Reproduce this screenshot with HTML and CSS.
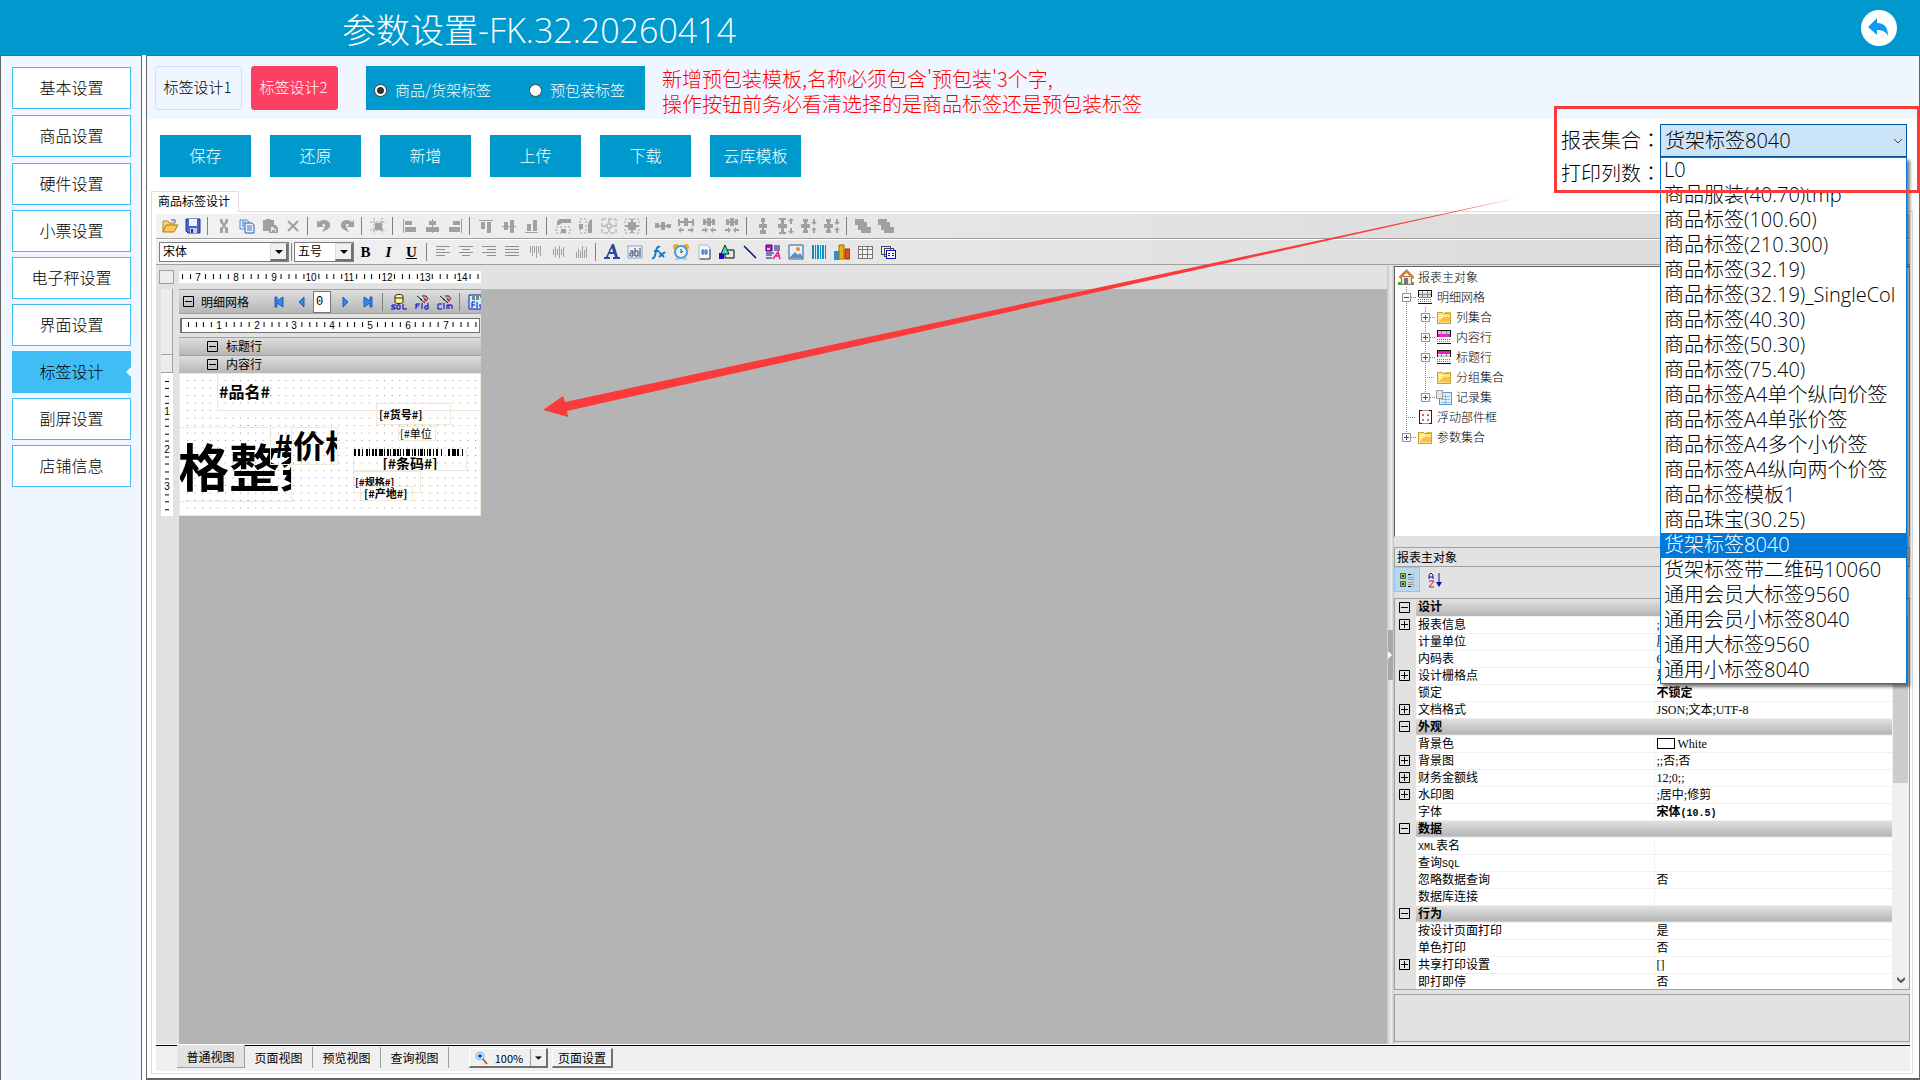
FILE: index.html
```html
<!DOCTYPE html>
<html lang="zh-CN">
<head>
<meta charset="utf-8">
<title>参数设置</title>
<link rel="stylesheet" href="styles.css">
</head>
<body>
<svg class="sprite" aria-hidden="true">
  <symbol id="open" viewBox="0 0 16 16"><path d="M1 14V3h5l1 2h5v3" fill="#f7d774" stroke="#b08a28"/><path d="M1 14 4 7h12l-4 7z" fill="#fbc95a" stroke="#a87818"/><path d="M9 2h4v3" fill="none" stroke="#345a9a"/></symbol>
  <symbol id="save" viewBox="0 0 16 16"><path d="M1 1h14v14H3l-2-2z" fill="#4a63d0" stroke="#23348c"/><path d="M4 1h8v7H4z" fill="#eef4ff"/><path d="M5 10h7v5H5z" fill="#c7cff0"/><path d="M6 11h2v4H6z" fill="#23348c"/></symbol>
  <symbol id="cut" viewBox="0 0 16 16"><path d="M4 1h2l2 5 2-5h2v3L9 8l3 2v5H9v-4L8 9l-1 2v4H4v-5l3-2-3-4z" fill="#a0a0a0"/></symbol>
  <symbol id="copy" viewBox="0 0 16 16"><path d="M1 2h7l2 2v7H1z" fill="#dceaff" stroke="#5b8bd0"/><path d="M6 5h7l2 2v8H6z" fill="#e8f2ff" stroke="#2d5fb0"/><path d="M8 8h5M8 10h5M8 12h5M3 4h3M3 6h2M3 8h2" stroke="#3f78c8"/></symbol>
  <symbol id="paste" viewBox="0 0 16 16"><path d="M1 2h3V1h5v1h3v5h2l2 3v5H7v-2H1z" fill="#a0a0a0"/><path d="M9 9h3v2h2v3H9z" fill="#e8e8e8"/><path d="M10 12h3v2h-3z" fill="#a0a0a0"/></symbol>
  <symbol id="del" viewBox="0 0 16 16"><path d="m3 3 10 10M13 3 3 13" stroke="#a0a0a0" stroke-width="2"/></symbol>
  <symbol id="undo" viewBox="0 0 16 16"><path d="M1 2v7h7L6 7c1-2 4-1 3 1-1 3-2 4-3 6 6-2 9-5 8-8C13 1 6 1 3 4z" fill="#a0a0a0"/></symbol>
  <symbol id="redo" viewBox="0 0 16 16"><path d="M15 2v7H8l2-2C9 5 6 6 7 8c1 3 2 4 3 6-6-2-9-5-8-8C3 1 10 1 13 4z" fill="#a0a0a0"/></symbol>
  <symbol id="snap" viewBox="0 0 16 16"><path d="M4 0v16M12 0v16M0 4h16M0 12h16" stroke="#a0a0a0" stroke-dasharray="2 1"/><path d="M5 5h7v7H5z" fill="#a0a0a0"/></symbol>
  <symbol id="al" viewBox="0 0 16 16"><path d="M2 1h1v14H2zM4 3h7v4H4zM4 9h11v5H4z" fill="#a0a0a0"/></symbol>
  <symbol id="ac" viewBox="0 0 16 16"><path d="M8 1h1v14H8zM5 3h7v4H5zM2 9h13v5H2z" fill="#a0a0a0"/></symbol>
  <symbol id="ar" viewBox="0 0 16 16"><path d="M14 1h1v14h-1zM6 3h7v4H6zM2 9h11v5H2z" fill="#a0a0a0"/></symbol>
  <symbol id="at" viewBox="0 0 16 16"><path d="M1 2h14v1H1zM3 4h4v7H3zM9 4h4v11H9z" fill="#a0a0a0"/></symbol>
  <symbol id="am" viewBox="0 0 16 16"><path d="M1 8h14v1H1zM3 4h4v8H3zM9 2h4v13H9z" fill="#a0a0a0"/></symbol>
  <symbol id="ab" viewBox="0 0 16 16"><path d="M1 14h13v1H1zM3 6h4v7H3zM9 2h4v11H9z" fill="#a0a0a0"/></symbol>
  <symbol id="w1" viewBox="0 0 16 16"><path d="M4 1h12v4H7L4 7H2V4zM6 11h5v4H6z" fill="#a0a0a0"/><path d="M1 9h14v6H1z" fill="none" stroke="#a0a0a0" stroke-dasharray="2 2"/></symbol>
  <symbol id="w2" viewBox="0 0 16 16"><path d="M11 3l3-2v14h-4V7zM1 6h4v5H1z" fill="#a0a0a0"/><path d="M2 1h6v14H2z" fill="none" stroke="#a0a0a0" stroke-dasharray="2 2"/></symbol>
  <symbol id="w3" viewBox="0 0 16 16"><path d="M1 1h14v14H1z" fill="none" stroke="#a0a0a0" stroke-dasharray="4 2"/><path d="M6 6h4v4H6zM8 2v3M8 11v3M2 8h3M11 8h3" fill="none" stroke="#a0a0a0"/></symbol>
  <symbol id="w4" viewBox="0 0 16 16"><path d="M1 1h14v14H1z" fill="none" stroke="#a0a0a0" stroke-dasharray="2 2"/><path d="M4 4h8v8H4zM7 1h2v14H7zM1 7h14v2H1z" fill="#a0a0a0"/></symbol>
  <symbol id="h0" viewBox="0 0 16 16"><path d="M0 5h4v2h2V4h4v3h2V6h4v4h-4V9h-2v3H6V9H4v1H0z" fill="#a0a0a0"/></symbol>
  <symbol id="h1" viewBox="0 0 16 16"><path d="M0 1h2v2h4V0h4v3h4V1h2v7h-2V5h-4v3H6V5H2v3H0zM0 12l3-3v2h3v2H3v2zM16 12l-3-3v2h-3v2h3v2z" fill="#a0a0a0"/></symbol>
  <symbol id="h2" viewBox="0 0 16 16"><path d="M2 1h3v2h1V0h4v3h1V1h3v6h-3V5h-1v3H6V5H5v2H2zM7 12 4 9v2H1v2h3v2zM9 12l3-3v2h3v2h-3v2z" fill="#a0a0a0"/></symbol>
  <symbol id="v0" viewBox="0 0 16 16"><path d="M6 0h4v4H9v2h3v4H9v2h2v4H5v-4h2v-2H4V6h3V4H6z" fill="#a0a0a0"/></symbol>
  <symbol id="v1" viewBox="0 0 16 16"><path d="M1 0h7v2H6v4h3v4H6v4h2v2H1v-2h2v-4H0V6h3V2H1zM13 0l3 3h-2v3h-2V3h-2zM13 16l3-3h-2v-3h-2v3h-2z" fill="#a0a0a0"/></symbol>
  <symbol id="v2" viewBox="0 0 16 16"><path d="M2 1h5v3H6v2h3v4H6v2h1v3H2v-3h1v-2H0V6h3V4H2zM13 7l3-3h-2V1h-2v3h-2zM13 9l3 3h-2v3h-2v-3h-2z" fill="#a0a0a0"/></symbol>
  <symbol id="layer" viewBox="0 0 16 16"><path d="M0 1h9v3h3v5h4v6H6v-3H3V7H0z" fill="#a0a0a0"/></symbol>
  <symbol id="jl" viewBox="0 0 16 16"><path d="M1 2h14v1H1zM1 5h9v1H1zM1 8h14v1H1zM1 11h9v1H1z" fill="#909090"/></symbol>
  <symbol id="jc" viewBox="0 0 16 16"><path d="M1 2h14v1H1zM4 5h8v1H4zM1 8h14v1H1zM4 11h8v1H4z" fill="#909090"/></symbol>
  <symbol id="jr" viewBox="0 0 16 16"><path d="M1 2h14v1H1zM6 5h9v1H6zM1 8h14v1H1zM6 11h9v1H6z" fill="#909090"/></symbol>
  <symbol id="jj" viewBox="0 0 16 16"><path d="M1 2h14v1H1zM1 5h14v1H1zM1 8h14v1H1zM1 11h14v1H1z" fill="#909090"/></symbol>
  <symbol id="jt" viewBox="0 0 16 16"><path d="M3 2h1v7H3zM5 2h1v10H5zM7 2h1v7H7zM9 2h1v12H9zM11 2h1v7h-1zM13 2h1v10h-1z" fill="#a0a0a0"/></symbol>
  <symbol id="jm" viewBox="0 0 16 16"><path d="M3 5h1v6H3zM5 3h1v10H5zM7 5h1v6H7zM9 2h1v12H9zM11 5h1v6h-1zM13 3h1v10h-1z" fill="#a0a0a0"/></symbol>
  <symbol id="jb" viewBox="0 0 16 16"><path d="M3 8h1v6H3zM5 5h1v9H5zM7 7h1v7H7zM9 2h1v12H9zM11 6h1v8h-1zM13 3h1v11h-1z" fill="#a0a0a0"/></symbol>
  <symbol id="bigA" viewBox="0 0 16 16"><path d="M8 0h2l4 13h2v2H9v-2h2l-1-3H5l-1 3h2v2H0v-2h2zM6 8h3L8 4z" fill="#2a4a9c" fill-rule="evenodd"/></symbol>
  <symbol id="field" viewBox="0 0 16 16"><path d="M1 2h14v12H1z" fill="#eef4fc" stroke="#8aa4c4"/><path d="M3 7h3v5H3V9h3M8 4v8h3V7H8M13 4v9" fill="none" stroke="#333a66"/></symbol>
  <symbol id="fx" viewBox="0 0 16 16"><path d="M2 14c3 1 3-3 4-7s2-5 4-4M4 7h5M9 8l5 5M15 8l-6 5" fill="none" stroke="#1a78c8" stroke-width="2"/></symbol>
  <symbol id="clock" viewBox="0 0 16 16"><circle cx="3" cy="3" r="3" fill="#f5a81c"/><circle cx="13" cy="3" r="3" fill="#f5a81c"/><circle cx="8" cy="8" r="6" fill="#e8f4fc" stroke="#4aa0d8" stroke-width="2"/><path d="M8 5v4l2-2" fill="none" stroke="#334"/><path d="M2 15h4M10 15h4" stroke="#9aa"/></symbol>
  <symbol id="hash" viewBox="0 0 16 16"><path d="M3 1h8l3 3v11H3z" fill="#f4f8ff" stroke="#a8b8d4"/><path d="M14 5v10H4" stroke="#445" fill="none"/><path d="M7 5v6M10 5v6M5 7h7M5 9h7" stroke="#2a64b0"/></symbol>
  <symbol id="shapes" viewBox="0 0 16 16"><path d="M6 6h9v8H6z" fill="none" stroke="#000"/><path d="M0 9h5v6H0z" fill="#2a00d0"/><path d="M6 1 2 10h8z" fill="#48e0b8" stroke="#033"/></symbol>
  <symbol id="line" viewBox="0 0 16 16"><path d="m2 2 12 12" stroke="#001a80" stroke-width="1.500"/></symbol>
  <symbol id="rich" viewBox="0 0 16 16"><path d="M1 1h6v6H1z" fill="#b018d8" stroke="#400080"/><path d="M2 4h3v2H2z" fill="#ffe000"/><path d="M9 2h6M9 4h6M9 6h6M1 9h8M1 11h6M1 14h6" stroke="#101080"/><path d="m8 15 5-7 2 7M10 12h5" stroke="#e8189c" fill="none" stroke-width="1.500"/></symbol>
  <symbol id="image" viewBox="0 0 16 16"><path d="M1 1h14v14H1z" fill="#e4f2ff" stroke="#33598c"/><circle cx="10" cy="5" r="2" fill="#ef8a28"/><path d="m2 13 5-5 3 3 2-2 3 4v1H2z" fill="#6a8cb4"/></symbol>
  <symbol id="bar" viewBox="0 0 16 16"><path d="M1 1h2v14H1zM4 1h1v14H4zM6 1h2v14H6zM9 1h1v14H9zM11 1h2v14h-2zM14 1h1v14h-1z" fill="#0a90c4"/></symbol>
  <symbol id="chart" viewBox="0 0 16 16"><path d="M0 7h5v9H0z" fill="#2c90d0"/><path d="M5 1h5v14H5z" fill="#f0b010" stroke="#a07000"/><path d="M11 5h5v10h-5z" fill="#e05018" stroke="#a02c00"/></symbol>
  <symbol id="grid" viewBox="0 0 16 16"><path d="M1 2h14v12H1zM1 5h14M1 10h14M5 2v12M10 2v12" fill="#f4f4f4" stroke="#777"/></symbol>
  <symbol id="sub" viewBox="0 0 16 16"><path d="M1 2h9v8H1zM4 4h9v8H4z" fill="#eee" stroke="#445"/><path d="M6 6h9v8H6z" fill="#fff" stroke="#0010c0"/><path d="M8 9h2M12 9h2M8 11h2M12 11h2" stroke="#0010c0"/></symbol>
  <symbol id="first" viewBox="0 0 16 16"><path d="M4 3h2v4l6-4v10L6 9v4H4z" fill="#3a86e8" stroke="#1c58b8"/></symbol>
  <symbol id="prev" viewBox="0 0 16 16"><path d="m5 8 5-5v10z" fill="#3a86e8" stroke="#1c58b8"/></symbol>
  <symbol id="next" viewBox="0 0 16 16"><path d="m11 8-5-5v10z" fill="#3a86e8" stroke="#1c58b8"/></symbol>
  <symbol id="last" viewBox="0 0 16 16"><path d="M12 3h-2v4L4 3v10l6-4v4h2z" fill="#3a86e8" stroke="#1c58b8"/></symbol>
  <symbol id="db" viewBox="0 0 16 16"><path d="M4 2c0-2 8-2 8 0v6c0 2-8 2-8 0z" fill="#fff68a" stroke="#222"/><path d="M4 4h8" stroke="#222"/><path d="M5 11H1v2h3v2H0M6 11h3v4H6zM12 10v5h4" fill="none" stroke="#0000c8"/></symbol>
  <symbol id="fld" viewBox="0 0 16 16"><path d="m3 2 5 4M8 2h4l2 3M6 5l5 4" stroke="#222" fill="none"/><path d="m9 3 5 3-3 2z" fill="#e02828"/><path d="M2 15v-5h4M2 12h3M8 9v6M14 9v6h-3v-3h3" fill="none" stroke="#0000c8"/></symbol>
  <symbol id="clm" viewBox="0 0 16 16"><path d="m3 2 5 4M8 2h4l2 3M6 5l5 4" stroke="#222" fill="none"/><path d="m9 3 5 3-3 2z" fill="#e02828"/><path d="M5 10H1v5h4M7 9v6M10 15v-4h5v4M12 11v4" fill="none" stroke="#0000c8"/></symbol>
  <symbol id="fbox" viewBox="0 0 16 16"><path d="M1 1h15v14H1z" fill="#c8f4fa" stroke="#1010c0"/><path d="M4 3h3M8 3h3M12 3h3M4 5h3M8 5h3" stroke="#222"/><path d="M4 14V8h3M4 11h3M9 8v6M15 8v5h-3v-3" fill="none" stroke="#0000c8"/></symbol>
  <symbol id="home" viewBox="0 0 16 16"><path d="M0 13h16v3H0z" fill="#48a838"/><path d="M3 7h10v8H3z" fill="#efe6da" stroke="#8a7a6a"/><path d="M0 8 8 0l8 8-2 2-6-6-6 6z" fill="#d8823a"/><path d="M6 9h4v6H6z" fill="#777"/></symbol>
  <symbol id="tgrid" viewBox="0 0 16 16"><path d="M1 2h14v12H1z" fill="#fff"/><path d="M2 3h12v5H2z" fill="#ddd"/><path d="M1 1h14v1H1zM1 2h1v6H1zM14 2h1v6h-1zM1 14h14v1H1z" fill="#111"/><path d="M2 5h12v1H2zM2 8h12v1H2zM5 2h1v6H5zM10 2h1v6h-1z" fill="#888"/><path d="M1 10.500h14M1 12.500h14" stroke="#777" stroke-dasharray="1 1"/></symbol>
  <symbol id="tbody" viewBox="0 0 16 16"><path d="M1 2h14v12H1z" fill="#fff"/><path d="M2 2h12v3H2z" fill="#ccc"/><path d="M1 5h14v3H1z" fill="#ff10d0"/><path d="M1 1h14v1H1zM1 2h1v6H1zM14 2h1v6h-1zM1 14h14v1H1z" fill="#111"/><path d="M5 2h1v6H5zM10 2h1v6h-1z" fill="#888"/><path d="M1 10.500h14M1 12.500h14" stroke="#777" stroke-dasharray="1 1"/></symbol>
  <symbol id="thead" viewBox="0 0 16 16"><path d="M1 2h14v12H1z" fill="#fff"/><path d="M2 2h12v3H2z" fill="#ff10d0"/><path d="M2 6h12v2H2z" fill="#ccc"/><path d="M1 1h14v1H1zM1 2h1v6H1zM14 2h1v6h-1zM1 14h14v1H1z" fill="#111"/><path d="M5 5h1v3H5zM10 5h1v3h-1z" fill="#888"/><path d="M1 10.500h14M1 12.500h14" stroke="#777" stroke-dasharray="1 1"/></symbol>
  <symbol id="folder" viewBox="0 0 16 16"><path d="M1.500 3.500h5l1 1h7v10h-13z" fill="#fbe08c" stroke="#d0a030"/><path d="M9 3h6v1H9z" fill="#c8d020"/><path d="m2 13 6-5h6v5z" fill="#fbc040"/><path d="M3 6.500h5M3 8.500h3" stroke="#fffbe8"/></symbol>
  <symbol id="rec" viewBox="0 0 16 16"><path d="M3.500 3.500h12v12h-12z" fill="#e4f2ff" stroke="#5a94d0"/><path d="M5 7.500h9M5 10.500h9M5 13.500h9M9.500 5v10" stroke="#88b8e0"/><path d="M.5 1.500h6v8h-6z" fill="#e4e4e4" stroke="#a0a0a0"/></symbol>
  <symbol id="float" viewBox="0 0 16 16"><path d="M2.500 1.500h12v13h-12z" fill="#fff" stroke="#222"/><path d="M5 5h2v2H5zM10 5h2v2h-2zM5 10h2v2H5zM10 10h2v2h-2z" fill="#f06820"/><path d="M5 1h7v1H5zM5 14h7v1H5z" fill="#999"/></symbol>
  <symbol id="t-v" viewBox="0 0 19 20"><path d="M9.500 0v20" stroke="#888" stroke-dasharray="1 1"/></symbol>
  <symbol id="t-plus" viewBox="0 0 19 20"><path d="M9.500 0v20M14 10.500h5" stroke="#888" stroke-dasharray="1 1"/><path d="M5.500 6.500h8v8h-8z" fill="#fff" stroke="#909090"/><path d="M7 10.500h5M9.500 8v5" stroke="#2c4a9c"/></symbol>
  <symbol id="t-last" viewBox="0 0 19 20"><path d="M9.500 0v6M14 10.500h5" stroke="#888" stroke-dasharray="1 1"/><path d="M5.500 6.500h8v8h-8z" fill="#fff" stroke="#909090"/><path d="M7 10.500h5M9.500 8v5" stroke="#2c4a9c"/></symbol>
  <symbol id="t-minus" viewBox="0 0 19 20"><path d="M9.500 0v20M14 10.500h5" stroke="#888" stroke-dasharray="1 1"/><path d="M5.500 6.500h8v8h-8z" fill="#fff" stroke="#909090"/><path d="M7 10.500h5" stroke="#2c4a9c"/></symbol>
  <symbol id="t-tee" viewBox="0 0 19 20"><path d="M9.500 0v20M9 10.500h10" stroke="#888" stroke-dasharray="1 1"/></symbol>
  <symbol id="minus" viewBox="0 0 11 11"><path d="M.5.5h10v10H.5zM2 5.500h7" fill="none" stroke="#000"/></symbol>
  <symbol id="plus" viewBox="0 0 11 11"><path d="M.5.5h10v10H.5zM2 5.500h7M5.500 2v7" fill="none" stroke="#000"/></symbol>
  <symbol id="down" viewBox="0 0 8 4"><path d="M0 0h8L4 4z" fill="#000"/></symbol>
</svg>

<header class="top">
  <h1>参数设置-FK.32.20260414</h1>
  <button class="back" aria-label="返回"><svg viewBox="0 0 36 36"><circle cx="18" cy="18" r="18" fill="#fff"/><path d="M7 17 16 8v5c8 0 11 5 11 13-2-4-5-6-11-6v5z" fill="#0f9bf5"/></svg></button>
</header>

<div class="main">
  <nav class="side">
    <button>基本设置</button><button>商品设置</button><button>硬件设置</button><button>小票设置</button><button>电子秤设置</button><button>界面设置</button><button class="on">标签设计</button><button>副屏设置</button><button>店铺信息</button>
  </nav>

  <main class="content">
    <div class="strip">
      <button class="sw">标签设计1</button>
      <button class="sw red">标签设计2</button>
      <div class="kinds">
        <label><input type="radio" name="kind" checked>商品/货架标签</label>
        <label><input type="radio" name="kind">预包装标签</label>
      </div>
      <p class="warn">新增预包装模板,名称必须包含'预包装'3个字,<br>操作按钮前务必看清选择的是商品标签还是预包装标签</p>
    </div>

    <div class="actions">
      <button>保存</button><button>还原</button><button>新增</button><button>上传</button><button>下载</button><button>云库模板</button>
      <div class="fields">
        <label for="report">报表集合<span lang="zh-TW">：</span></label>
        <div class="combo">
          <select id="report"><option>货架标签8040</option></select>
          <svg class="chev" viewBox="0 0 10 6"><path d="m1 1 4 4 4-4" fill="none" stroke="#444"/></svg>
          <ul class="list" role="listbox">
            <li>L0</li><li>商品服装(40.70)tmp</li><li>商品标签(100.60)</li><li>商品标签(210.300)</li><li>商品标签(32.19)</li><li>商品标签(32.19)_SingleCol</li><li>商品标签(40.30)</li><li>商品标签(50.30)</li><li>商品标签(75.40)</li><li>商品标签A4单个纵向价签</li><li>商品标签A4单张价签</li><li>商品标签A4多个小价签</li><li>商品标签A4纵向两个价签</li><li>商品标签模板1</li><li>商品珠宝(30.25)</li><li class="sel">货架标签8040</li><li>货架标签带二维码10060</li><li>通用会员大标签9560</li><li>通用会员小标签8040</li><li>通用大标签9560</li><li>通用小标签8040</li>
          </ul>
        </div>
        <label for="cols">打印列数<span lang="zh-TW">：</span></label>
        <input id="cols" type="text">
        <span class="mark"></span>
      </div>
    </div>

    <div class="tabs"><button>商品标签设计</button></div>
    <section class="page">
      <div class="bar">
        <button><svg><use href="#open"/></svg></button><button><svg><use href="#save"/></svg></button><i></i>
        <button><svg><use href="#cut"/></svg></button><button><svg><use href="#copy"/></svg></button><button><svg><use href="#paste"/></svg></button><button><svg><use href="#del"/></svg></button><i></i>
        <button><svg><use href="#undo"/></svg></button><button><svg><use href="#redo"/></svg></button><i></i>
        <button><svg><use href="#snap"/></svg></button><i></i>
        <button><svg><use href="#al"/></svg></button><button><svg><use href="#ac"/></svg></button><button><svg><use href="#ar"/></svg></button><i></i>
        <button><svg><use href="#at"/></svg></button><button><svg><use href="#am"/></svg></button><button><svg><use href="#ab"/></svg></button><i></i>
        <button><svg><use href="#w1"/></svg></button><button><svg><use href="#w2"/></svg></button><button><svg><use href="#w3"/></svg></button><button><svg><use href="#w4"/></svg></button><i></i>
        <button><svg><use href="#h0"/></svg></button><button><svg><use href="#h1"/></svg></button><button><svg><use href="#h2"/></svg></button><button><svg><use href="#h2"/></svg></button><i></i>
        <button><svg><use href="#v0"/></svg></button><button><svg><use href="#v1"/></svg></button><button><svg><use href="#v2"/></svg></button><button><svg><use href="#v2"/></svg></button><i></i>
        <button><svg><use href="#layer"/></svg></button><button><svg><use href="#layer"/></svg></button>
      </div>
      <div class="bar">
        <div class="pick face"><select aria-label="字体"><option>宋体</option></select><span><svg><use href="#down"/></svg></span></div><i class="tight"></i>
        <div class="pick size"><select aria-label="字号"><option>五号</option></select><span><svg><use href="#down"/></svg></span></div>
        <button class="fmt">B</button><button class="fmt it">I</button><button class="fmt un">U</button><i></i>
        <button><svg><use href="#jl"/></svg></button><button><svg><use href="#jc"/></svg></button><button><svg><use href="#jr"/></svg></button><button><svg><use href="#jj"/></svg></button><button><svg><use href="#jt"/></svg></button><button><svg><use href="#jm"/></svg></button><button><svg><use href="#jb"/></svg></button><i></i>
        <button><svg><use href="#bigA"/></svg></button><button><svg><use href="#field"/></svg></button><button><svg><use href="#fx"/></svg></button><button><svg><use href="#clock"/></svg></button><button><svg><use href="#hash"/></svg></button><button><svg><use href="#shapes"/></svg></button><button><svg><use href="#line"/></svg></button><button><svg><use href="#rich"/></svg></button><button><svg><use href="#image"/></svg></button><button><svg><use href="#bar"/></svg></button><button><svg><use href="#chart"/></svg></button><button><svg><use href="#grid"/></svg></button><button><svg><use href="#sub"/></svg></button>
      </div>

      <div class="work">
        <div class="design">
          <div class="corner"><span></span></div>
          <svg class="hr top-ruler" width="302" height="12">
            <defs><pattern id="tk" width="37.800" height="12" patternUnits="userSpaceOnUse" x="19"><path d="M7 3h1v5H7zM15 3h1v5h-1zM22 3h1v5h-1zM30 3h1v5h-1z"/></pattern></defs>
            <rect width="302" height="12" fill="url(#tk)"/>
            <g><text x="19" y="10">7</text><text x="57" y="10">8</text><text x="95" y="10">9</text><text x="132" y="10">10</text><text x="170" y="10">11</text><text x="208" y="10">12</text><text x="246" y="10">13</text><text x="283" y="10">14</text></g>
          </svg>
          <div class="vcol">
            <span class="vbox tall"></span><span class="vbox"></span>
            <svg class="hr" width="12" height="143">
              <defs><pattern id="vt" width="12" height="37.800" patternUnits="userSpaceOnUse"><path d="M4 8h4v1H4zM4 15h4v1H4zM4 23h4v1H4zM4 30h4v1H4z"/></pattern></defs>
              <rect width="12" height="143" fill="url(#vt)"/>
              <g><text x="6" y="42">1</text><text x="6" y="80">2</text><text x="6" y="117">3</text></g>
            </svg>
          </div>
          <div class="canvas">
            <div class="report">
              <div class="band first">
                <svg class="ex"><use href="#minus"/></svg><span class="name">明细网格</span>
                <button><svg><use href="#first"/></svg></button><button><svg><use href="#prev"/></svg></button><input type="text" value="0" aria-label="记录号"><button><svg><use href="#next"/></svg></button><button><svg><use href="#last"/></svg></button><i></i>
                <button><svg><use href="#db"/></svg></button><button><svg><use href="#fld"/></svg></button><button><svg><use href="#clm"/></svg></button><i></i><button><svg><use href="#fbox"/></svg></button>
              </div>
              <div class="inner-ruler">
                <svg class="hr" width="298" height="12">
                  <defs><pattern id="tk2" width="37.800" height="12" patternUnits="userSpaceOnUse" x="-1"><path d="M7 3h1v5H7zM15 3h1v5h-1zM22 3h1v5h-1zM30 3h1v5h-1z"/></pattern></defs>
                  <rect width="298" height="12" fill="url(#tk2)"/>
                  <g><text x="37" y="10">1</text><text x="75" y="10">2</text><text x="112" y="10">3</text><text x="150" y="10">4</text><text x="188" y="10">5</text><text x="226" y="10">6</text><text x="264" y="10">7</text></g>
                </svg>
              </div>
              <div class="band sub"><svg class="ex"><use href="#minus"/></svg><span>标题行</span></div>
              <div class="band sub"><svg class="ex"><use href="#minus"/></svg><span>内容行</span></div>
              <div class="sheet">
                <svg class="dots" width="302" height="143"><defs><pattern id="dp" width="7.580" height="7.500" patternUnits="userSpaceOnUse" x="8" y="7"><rect width="1" height="1" fill="#a09090"/></pattern></defs><rect x="8" y="7" width="292" height="132" fill="url(#dp)"/></svg>
                <span class="box b-name">#品名#</span>
                <span class="box b-no">[#货号#]</span>
                <span class="box b-unit">[#单位</span>
                <span class="box b-big">格整数</span>
                <span class="box b-price">#价格</span>
                <span class="box b-code"><svg width="114" height="7"><path d="M0 0h2v7H0zM4 0h2v7H4zM8 0h1v7H8zM12 0h2v7h-2zM15 0h1v7h-1zM18 0h2v7h-2zM21 0h2v7h-2zM25 0h4v7h-4zM30 0h1v7h-1zM33 0h2v7h-2zM36 0h1v7h-1zM39 0h3v7h-3zM43 0h2v7h-2zM46 0h1v7h-1zM49 0h1v7h-1zM52 0h4v7h-4zM58 0h1v7h-1zM60 0h2v7h-2zM64 0h1v7h-1zM66 0h3v7h-3zM70 0h1v7h-1zM73 0h1v7h-1zM75 0h2v7h-2zM79 0h1v7h-1zM82 0h2v7h-2zM87 0h1v7h-1zM94 0h2v7h-2zM98 0h4v7h-4zM103 0h2v7h-2zM108 0h1v7h-1zM112 0h2v7h-2z"/></svg>[#条码#]</span>
                <span class="box b-spec">[#规格#]</span>
                <span class="box b-from">[#产地#]</span>
              </div>
            </div>
          </div>
        </div>
        <div class="split"><span><svg viewBox="0 0 4 8"><path d="M0 0v8l4-4z" fill="#fff"/></svg></span></div>
        <aside class="panel">
          <ul class="tree">
            <li><svg class="ico"><use href="#home"/></svg>报表主对象</li>
            <li><svg class="ln"><use href="#t-minus"/></svg><svg class="ico"><use href="#tgrid"/></svg>明细网格</li>
            <li><svg class="ln"><use href="#t-v"/></svg><svg class="ln"><use href="#t-plus"/></svg><svg class="ico"><use href="#folder"/></svg>列集合</li>
            <li><svg class="ln"><use href="#t-v"/></svg><svg class="ln"><use href="#t-plus"/></svg><svg class="ico"><use href="#tbody"/></svg>内容行</li>
            <li><svg class="ln"><use href="#t-v"/></svg><svg class="ln"><use href="#t-plus"/></svg><svg class="ico"><use href="#thead"/></svg>标题行</li>
            <li><svg class="ln"><use href="#t-v"/></svg><svg class="ln"><use href="#t-tee"/></svg><svg class="ico"><use href="#folder"/></svg>分组集合</li>
            <li><svg class="ln"><use href="#t-v"/></svg><svg class="ln"><use href="#t-last"/></svg><svg class="ico"><use href="#rec"/></svg>记录集</li>
            <li><svg class="ln"><use href="#t-tee"/></svg><svg class="ico"><use href="#float"/></svg>浮动部件框</li>
            <li><svg class="ln"><use href="#t-last"/></svg><svg class="ico"><use href="#folder"/></svg>参数集合</li>
          </ul>
          <div class="ptitle">报表主对象</div>
          <div class="ptools">
            <button class="on" aria-label="分类"><svg viewBox="0 0 16 16"><path d="M1.500 1.500h5v5h-5zM1.500 9.500h5v5h-5z" fill="#9ad010" stroke="#555"/><path d="M3 4h2M4 3v2M3 12h2M4 11v2" stroke="#000"/><path d="M9 2.500h3M9 14.500h3" stroke="#000"/><path d="M9 5.500h6M9 7.500h6M9 10.500h6M9 12.500h6M13 2.500h2M13 14.500h2" stroke="#999"/></svg></button>
            <button aria-label="排序"><svg viewBox="0 0 16 16"><path d="M2 7V3l2-2 2 2v4M2 5h4" fill="none" stroke="#1010a0"/><path d="M2 9h5l-5 6h5" fill="none" stroke="#c01818"/><path d="M12 1v10" stroke="#1010a0"/><path d="M9 10h6l-3 5z" fill="#1010a0"/></svg></button>
          </div>
          <div class="props">
            <table>
              <colgroup><col class="c1"><col class="c2"><col></colgroup>
              <tr class="cat"><td><svg class="ex"><use href="#minus"/></svg></td><th colspan="2">设计</th></tr>
              <tr><td><svg class="ex"><use href="#plus"/></svg></td><td>报表信息</td><td>;</td></tr>
              <tr><td></td><td>计量单位</td><td>厘米</td></tr>
              <tr><td></td><td>内码表</td><td>65001</td></tr>
              <tr><td><svg class="ex"><use href="#plus"/></svg></td><td>设计栅格点</td><td>是</td></tr>
              <tr><td></td><td>锁定</td><td><b>不锁定</b></td></tr>
              <tr><td><svg class="ex"><use href="#plus"/></svg></td><td>文档格式</td><td>JSON;文本;UTF-8</td></tr>
              <tr class="cat"><td><svg class="ex"><use href="#minus"/></svg></td><th colspan="2">外观</th></tr>
              <tr><td></td><td>背景色</td><td><span class="swatch"></span>White</td></tr>
              <tr><td><svg class="ex"><use href="#plus"/></svg></td><td>背景图</td><td>;;否;否</td></tr>
              <tr><td><svg class="ex"><use href="#plus"/></svg></td><td>财务金额线</td><td>12;0;;</td></tr>
              <tr><td><svg class="ex"><use href="#plus"/></svg></td><td>水印图</td><td>;居中;修剪</td></tr>
              <tr><td></td><td>字体</td><td><b>宋体<span class="mono">(10.5)</span></b></td></tr>
              <tr class="cat"><td><svg class="ex"><use href="#minus"/></svg></td><th colspan="2">数据</th></tr>
              <tr><td></td><td><span class="mono">XML</span>表名</td><td></td></tr>
              <tr><td></td><td>查询<span class="mono">SQL</span></td><td></td></tr>
              <tr><td></td><td>忽略数据查询</td><td>否</td></tr>
              <tr><td></td><td>数据库连接</td><td></td></tr>
              <tr class="cat"><td><svg class="ex"><use href="#minus"/></svg></td><th colspan="2">行为</th></tr>
              <tr><td></td><td>按设计页面打印</td><td>是</td></tr>
              <tr><td></td><td>单色打印</td><td>否</td></tr>
              <tr><td><svg class="ex"><use href="#plus"/></svg></td><td>共享打印设置</td><td>[]</td></tr>
              <tr><td></td><td>即打即停</td><td>否</td></tr>
            </table>
            <div class="scroll"><span></span><svg viewBox="0 0 8 6"><path d="m0 1 4 4 4-4" fill="none" stroke="#555" stroke-width="2"/></svg></div>
          </div>
          <div class="desc"></div>
        </aside>
      </div>

      <footer class="foot">
        <div class="views"><button class="on">普通视图</button><button>页面视图</button><button>预览视图</button><button>查询视图</button></div>
        <button class="raised zoom"><svg viewBox="0 0 14 14"><circle cx="6" cy="5" r="4" fill="#d8ecff" stroke="#8aa8c8"/><path d="M4 5h4M6 3v4" stroke="#0868c8" stroke-width="2"/><path d="m9 8 4 5" stroke="#a86428" stroke-width="2"/></svg><span>100%</span><em><svg viewBox="0 0 8 4"><use href="#down"/></svg></em></button>
        <button class="raised">页面设置</button>
      </footer>
    </section>
  </main>
</div>

<svg class="arrow" width="984" height="222" viewBox="0 0 984 222" aria-hidden="true">
  <defs><linearGradient id="fade"><stop offset="0" stop-color="#fb3b3b"/><stop offset=".96" stop-color="#fb3b3b"/><stop offset="1" stop-color="#fb3b3b" stop-opacity=".2"/></linearGradient></defs>
  <path d="M0 214 20 200 22 206 983 0 24 215 25 221z" fill="url(#fade)"/>
</svg>
</body>
</html>
```
FILE: styles.css
```css
* { box-sizing: border-box; }
html, body { height: 100%; margin: 0; }
body {
  display: flex; flex-direction: column; min-height: 100vh; overflow: hidden;
  font: 12px/16px "Noto Sans CJK SC", sans-serif; color: #000; background: #fff;
}
h1, p, ul { margin: 0; padding: 0; font-weight: 300; }
ul { list-style: none; }
button, input, select { font: inherit; color: inherit; padding: 0; margin: 0; border: 0; background: none; border-radius: 0; }
.sprite { position: absolute; width: 0; height: 0; }
.ico, #al, #ac, #ar, #at, #am, #ab, #grid, #sub { shape-rendering: crispEdges; }

.top { display: flex; align-items: center; justify-content: space-between; height: 55px; padding: 0 23px 0 342px; background: #0099cd; color: #fff; flex: none; }
.top h1 { font-family: "Open Sans", "Noto Sans CJK SC", sans-serif; font-size: 34px; line-height: 48px; padding-top: 4px; }
.back { width: 36px; height: 36px; }
.back svg { display: block; width: 36px; height: 36px; }

.main { display: flex; flex: 1; gap: 4px; min-height: 0; }
.side { width: 142px; flex: none; display: flex; flex-direction: column; gap: 5px; padding: 11px 10px 0 11px; background: #f0f6ff; border: 1px solid #666; border-bottom: 0; }
.side button { height: 42px; padding-bottom: 2px; border: 1px solid #41bdf5; background: #fff; font-size: 16px; font-weight: 300; position: relative; }
.side button:nth-child(-n+2) { margin-bottom: 1px; }
.side .on { background: #41bdf5; }
.side .on::after { content: ""; position: absolute; right: -1px; top: 15px; border: 5px solid transparent; border-right-color: #f0f6ff; border-left: 0; }

.content { flex: 1; min-width: 0; display: flex; flex-direction: column; border: 1px solid #666; border-width: 1px 1px 2px; background: #fff; }
.strip { display: flex; align-items: flex-start; height: 63px; flex: none; padding: 10px 0 0 8px; background: #f0f6ff; font-size: 15px; font-weight: 300; }
.sw { width: 87px; height: 44px; margin-right: 9px; padding: 0 2px 2px 0; border: 1px solid #cfe0fa; border-radius: 3px; }
.sw.red { background: #fb4062; border-color: #fb4062; color: #fff; }
.kinds { display: flex; align-items: center; width: 279px; height: 44px; margin-left: 19px; padding: 4px 0 0 8px; background: #0099cd; color: #fff; }
.kinds label { display: flex; align-items: center; width: 155px; gap: 8px; white-space: nowrap; }
.kinds label + label { width: auto; }
.kinds input { appearance: none; width: 13px; height: 13px; border: 1px solid #444; border-radius: 50%; background: #fff; }
.kinds input:checked { background: radial-gradient(circle, #333 0 3px, #fff 4px); }
.warn { margin-left: 17px; color: #f00; font-size: 20px; line-height: 25px; white-space: nowrap; }

.actions { display: flex; align-items: flex-start; gap: 19px; height: 72px; flex: none; padding: 16px 12px 0 13px; }
.actions > button { width: 91px; height: 42px; padding-bottom: 2px; background: #0099cd; color: #fff; font-size: 16px; font-weight: 300; }
.fields { position: relative; z-index: 5; display: grid; grid-template-columns: 99px 247px; grid-template-rows: 33px 33px; align-items: center; margin: -11px 0 0 auto; font-family: "Open Sans", "Noto Sans CJK SC", sans-serif; font-size: 20px; font-weight: 300; }
.fields label { line-height: 28px; white-space: nowrap; }
.fields label span { font-family: "Noto Sans CJK TC", sans-serif; }
.fields > input { border: 1px solid #999; height: 28px; }
.combo { position: relative; height: 33px; }
.combo select { appearance: none; width: 100%; height: 33px; padding: 0 4px; border: 1px solid #005499; background: #cce4f7; line-height: 30px; }
.chev { position: absolute; right: 4px; top: 14px; width: 10px; height: 6px; }
.list { position: absolute; top: 33px; left: 0; width: 100%; background: #fff; border: 1px solid #0078d7; box-shadow: 3px 3px 3px rgba(0,0,0,.5); overflow: hidden; }
.list li { height: 25px; line-height: 24px; padding-left: 3px; white-space: nowrap; }
.list .sel { background: #0078d7; color: #fff; }
.mark { position: absolute; left: -7px; top: -18px; right: -13px; height: 87px; border: 3px solid #fb3b3b; }

.tabs { flex: none; height: 21px; padding-left: 4px; }
.tabs button { position: relative; z-index: 1; height: 21px; width: 88px; padding: 0 2px 2px 0; border: 1px solid #dcdcdc; border-bottom: 0; background: #fff; }
.page { flex: 1; min-height: 0; display: flex; flex-direction: column; margin: -1px 6px 4px 4px; padding: 2px 2px 2px 4px; border: 1px solid #dcdcdc; }
.bar { display: flex; align-items: center; flex: none; height: 25px; margin-bottom: 1px; padding-left: 2px; border-bottom: 1px solid #a0a0a0; background: linear-gradient(90deg, #f2f2f2, #dcdcdc 80%); }
.bar button, .band button { width: 23px; height: 22px; flex: none; display: flex; align-items: center; justify-content: center; }
.bar button svg, .band button svg { width: 16px; height: 16px; }
.bar > i, .band > i { width: 1px; height: 18px; margin: 0 4px 0 3px; background: #808080; flex: none; }
.bar > .tight { margin: 0 2px; }
.bar .fmt { font: bold 15px/20px "Liberation Serif", serif; }
.bar .it { font-style: italic; }
.bar .un { text-decoration: underline; }
.pick { display: flex; height: 20px; border: 1px solid #808080; background: #fff; margin-left: 1px; }
.pick select { appearance: none; flex: 1; min-width: 0; padding: 0 0 2px 3px; }
.pick span { width: 18px; display: flex; align-items: center; justify-content: center; background: #f0f0f0; border: 1px solid #ddd; border-right: 2px solid #707070; border-bottom: 2px solid #707070; }
.pick span svg { width: 8px; height: 4px; }
.face { width: 130px; }
.pick.size { width: 60px; margin-left: 0; }

.work { flex: 1; min-height: 0; display: flex; background: #e2e2e2; margin-top: -1px; }
.design { flex: 1; min-width: 0; display: grid; grid-template-columns: 23px 1fr; grid-template-rows: 24px 1fr; }
.corner { padding: 5px 0 0 3px; }
.corner span { display: block; width: 15px; height: 14px; border: 1px solid #a0a0a0; background: #ececec; }
.hr { display: block; background: #fff; shape-rendering: crispEdges; }
.hr text { font: 10px "Liberation Sans", sans-serif; text-anchor: middle; }
.top-ruler { margin-top: 6px; }
.vcol { padding-left: 5px; }
.vbox { display: block; width: 12px; height: 18px; border: 1px solid #a0a0a0; border-width: 0 1px 1px 0; background: #ececec; }
.vbox.tall { height: 66px; }
.canvas { background: #b4b4b4; }
.report { width: 302px; background: #e2e2e2; }
.band { display: flex; align-items: center; background: linear-gradient(#dedede, #b6b6b6); border-top: 1px solid #a0a0a0; overflow: hidden; white-space: nowrap; }
.ex { width: 11px; height: 11px; display: block; flex: none; }
.first { height: 25px; padding-left: 4px; border-bottom: 1px solid #a0a0a0; }
.first .name { flex: none; width: 48px; margin: 0 18px 0 7px; }
.band input { width: 18px; height: 22px; flex: none; margin-right: 2px; padding-left: 2px; border: 1px solid #777; background: #fff; font: 12px/16px "Liberation Mono", monospace; }
.inner-ruler { margin: 4px 1px; border: 1px solid #707070; border-width: 1px 1px 1px 2px; height: 15px; overflow: hidden; background: #fff; }
.sub { height: 18px; padding-left: 28px; gap: 8px; }
.sub span { padding-bottom: 1px; }
.sheet { position: relative; height: 143px; background: #fff; border: 1px solid #ece9d8; overflow: hidden; }
.dots { position: absolute; left: -1px; top: -1px; }
.box { position: absolute; border: 1px solid #ece9d8; overflow: hidden; white-space: nowrap; font-weight: 700; }
.b-name { left: 37px; top: -1px; width: 264px; height: 38px; font-size: 16px; line-height: 34px; padding-left: 1px; }
.b-no { left: 196px; top: 29px; width: 75px; height: 22px; font-size: 11px; line-height: 20px; padding-left: 2px; }
.b-unit { left: 218px; top: 52px; width: 38px; height: 15px; font-size: 11px; line-height: 12px; padding-left: 1px; font-weight: 400; }
.b-big { left: -1px; top: 53px; width: 113px; height: 75px; font-size: 51px; line-height: 74px; font-weight: 700; text-indent: -2px; }
.b-price { left: 90px; top: 53px; width: 68px; height: 38px; font-size: 32px; line-height: 32px; padding-left: 3px; background: linear-gradient(#ece9d8, #ece9d8) 20px 0 / 1px 100% no-repeat; }
.b-code { left: 173px; top: 75px; width: 114px; height: 22px; font-size: 14px; line-height: 14px; text-align: center; border-top: 0; }
.b-code svg { display: block; }
.b-spec { left: 173px; top: 97px; width: 68px; height: 22px; font-size: 10px; line-height: 20px; padding-left: 1px; }
.b-from { left: 180px; top: 112px; width: 53px; height: 15px; font-size: 11px; line-height: 12px; padding-left: 3px; }

.split { width: 7px; flex: none; display: flex; align-items: center; background: linear-gradient(90deg, #c8c8c8, #efefef 60%, #c0c0c0); }
.split span { width: 5px; height: 50px; margin-left: 1px; background: #a8a8a8; display: flex; align-items: center; }
.split svg { width: 4px; height: 8px; }
.panel { width: 516px; flex: none; display: flex; flex-direction: column; padding-top: 1px; }
.tree { height: 271px; flex: none; padding: 0 0 0 2px; background: #fff; border: 1px solid #a0a0a0; border-color: #606060 #a0a0a0 #e2e2e2 #606060; }
.tree li { display: flex; align-items: center; height: 20px; }
.ln { width: 19px; height: 20px; flex: none; }
.ico { width: 16px; height: 16px; margin: 0 4px 0 1px; flex: none; }
.ptitle { height: 20px; flex: none; margin-top: 10px; padding: 1px 2px; border: 1px solid #a0a0a0; }
.ptools { display: flex; height: 31px; flex: none; gap: 2px; }
.ptools button { width: 26px; height: 25px; display: flex; align-items: center; justify-content: center; }
.ptools .on { background: #b8d8f0; border: 1px solid #90c8f4; }
.ptools svg { width: 16px; height: 16px; }
.props { flex: 1; min-height: 0; display: flex; border: 1px solid #a0a0a0; overflow: hidden; }
.props table { flex: 1; border-collapse: collapse; table-layout: fixed; height: 391px; }
.props tr { height: 17px; }
.props td, .props th { height: 17px; padding: 0 0 0 2px; line-height: 16px; border-bottom: 1px solid #f0f0f0; background: #fff; text-align: left; white-space: nowrap; font-family: "Liberation Serif", "Noto Sans CJK SC", serif; }
.props td:first-child { background: #e2e2e2; border: 0; padding-left: 4px; }
.props td:nth-child(3) { border-left: 1px solid #f0f0f0; }
.props th { background: linear-gradient(#e2e2e2, #b4b4b4); }
.props .mono { font: 10px/12px "Liberation Mono", monospace; font-weight: inherit; }
.c1 { width: 21px; }
.c2 { width: 238px; }
.swatch { display: inline-block; width: 18px; height: 11px; margin-right: 3px; border: 1px solid #000; vertical-align: -1px; }
.scroll { width: 17px; flex: none; display: flex; flex-direction: column; align-items: center; justify-content: space-between; padding: 17px 0 6px; background: #f0f0f0; }
.scroll span { width: 15px; height: 167px; background: #cdcdcd; }
.scroll svg { width: 8px; height: 6px; }
.desc { height: 48px; flex: none; margin: 4px 0 2px; border: 1px solid #a0a0a0; }

.foot { display: flex; align-items: flex-start; flex: none; height: 26px; margin-top: 1px; padding-left: 21px; border-top: 1px solid #000; background: #f0f0f0; }
.foot button { white-space: nowrap; }
.views { display: flex; margin: -1px 20px 0 0; }
.views button { width: 68px; height: 21px; margin-top: 2px; border-right: 1px solid #a0a0a0; }
.views .on { height: 23px; margin: 0; padding-top: 2px; background: #e2e2e2; border-bottom: 1px solid #a0a0a0; }
.raised { height: 20px; margin: 2px 4px 0 0; padding: 0 5px; border: 1px solid #fff; border-right: 2px solid #707070; border-bottom: 2px solid #707070; }
.zoom { display: flex; align-items: center; width: 79px; padding: 0; }
.zoom > svg { width: 14px; height: 14px; margin-left: 4px; }
.zoom span { flex: 1; text-align: center; font-size: 11px; }
.zoom em { width: 16px; height: 17px; border-left: 1px solid #a0a0a0; display: flex; align-items: center; justify-content: center; }
.zoom em svg { width: 7px; height: 4px; }

.arrow { position: absolute; left: 543px; top: 196px; pointer-events: none; z-index: 4; }
```
